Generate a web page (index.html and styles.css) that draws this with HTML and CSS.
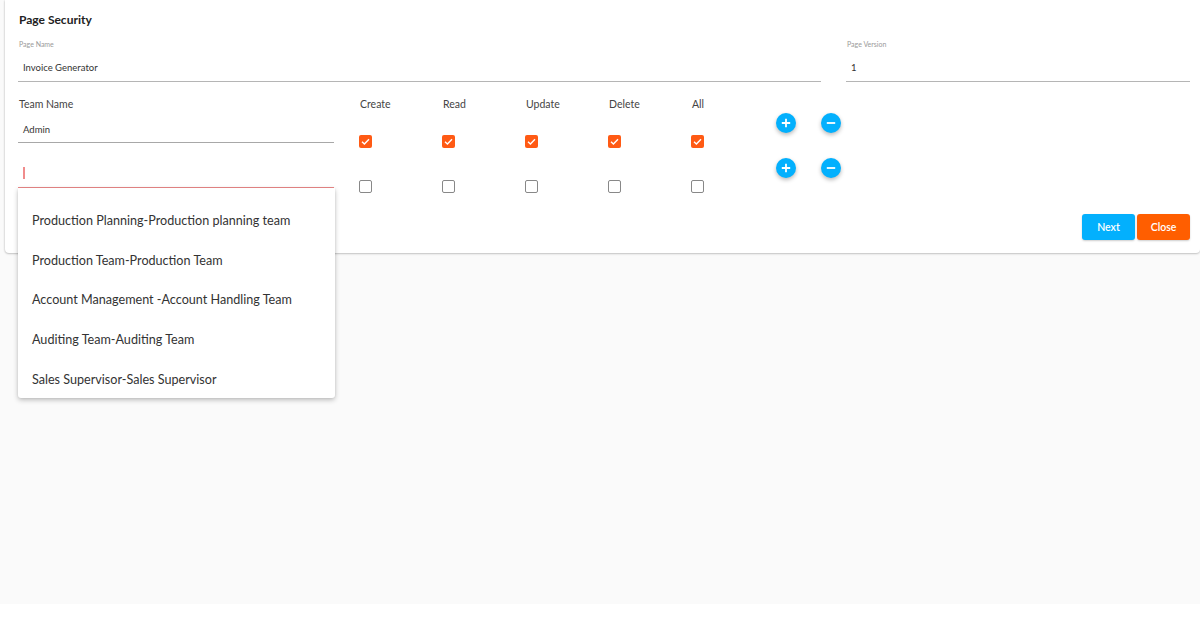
FILE: index.html
```html
<!DOCTYPE html>
<html>
<head>
<meta charset="utf-8">
<link rel="stylesheet" href="styles.css">
</head>
<body>
<div class="page">
  <div class="card">
    <div class="title">Page Security</div>
    <div class="fields">
      <div class="field field-name">
        <div class="label">Page Name</div>
        <div class="input">Invoice Generator</div>
      </div>
      <div class="field field-version">
        <div class="label">Page Version</div>
        <div class="input">1</div>
      </div>
    </div>

    <div class="table">
      <div class="row head">
        <div class="team">Team Name</div>
        <div class="cell">Create</div>
        <div class="cell">Read</div>
        <div class="cell">Update</div>
        <div class="cell">Delete</div>
        <div class="cell">All</div>
      </div>

      <div class="row">
        <div class="team"><div class="team-input">Admin</div></div>
        <div class="cell"><span class="cb on"><svg viewBox="0 0 13 13"><path d="M3 6.8 5.4 9 10 4.2" fill="none" stroke="#fff" stroke-width="1.4"/></svg></span></div>
        <div class="cell"><span class="cb on"><svg viewBox="0 0 13 13"><path d="M3 6.8 5.4 9 10 4.2" fill="none" stroke="#fff" stroke-width="1.4"/></svg></span></div>
        <div class="cell"><span class="cb on"><svg viewBox="0 0 13 13"><path d="M3 6.8 5.4 9 10 4.2" fill="none" stroke="#fff" stroke-width="1.4"/></svg></span></div>
        <div class="cell"><span class="cb on"><svg viewBox="0 0 13 13"><path d="M3 6.8 5.4 9 10 4.2" fill="none" stroke="#fff" stroke-width="1.4"/></svg></span></div>
        <div class="cell"><span class="cb on"><svg viewBox="0 0 13 13"><path d="M3 6.8 5.4 9 10 4.2" fill="none" stroke="#fff" stroke-width="1.4"/></svg></span></div>
        <div class="actions">
          <span class="fab"><svg viewBox="0 0 20 20"><path d="M10 5.8v8.4M5.8 10h8.4" stroke="#fff" stroke-width="1.8"/></svg></span>
          <span class="fab"><svg viewBox="0 0 20 20"><path d="M5.8 10h8.4" stroke="#fff" stroke-width="1.8"/></svg></span>
        </div>
      </div>

      <div class="row">
        <div class="team"><div class="team-input focused"><span class="caret"></span></div></div>
        <div class="cell"><span class="cb"></span></div>
        <div class="cell"><span class="cb"></span></div>
        <div class="cell"><span class="cb"></span></div>
        <div class="cell"><span class="cb"></span></div>
        <div class="cell"><span class="cb"></span></div>
        <div class="actions">
          <span class="fab"><svg viewBox="0 0 20 20"><path d="M10 5.8v8.4M5.8 10h8.4" stroke="#fff" stroke-width="1.8"/></svg></span>
          <span class="fab"><svg viewBox="0 0 20 20"><path d="M5.8 10h8.4" stroke="#fff" stroke-width="1.8"/></svg></span>
        </div>
      </div>
    </div>

    <div class="buttons">
      <button class="btn next">Next</button>
      <button class="btn close">Close</button>
    </div>

    <div class="dropdown">
      <ul class="options">
        <li>Production Planning-Production planning team</li>
        <li>Production Team-Production Team</li>
        <li>Account Management -Account Handling Team</li>
        <li>Auditing Team-Auditing Team</li>
        <li>Sales Supervisor-Sales Supervisor</li>
      </ul>
    </div>
  </div>
</div>
</body>
</html>
```

FILE: styles.css
```css
* { box-sizing: border-box; }
html, body { margin: 0; padding: 0; background: #ffffff; }
body {
  font-family: "Source Sans Pro", Lato, "Liberation Sans", sans-serif;
  color: #333;
  width: 1200px;
  height: 639px;
  overflow: hidden;
}
.page {
  background: #fafafa;
  height: 604px;
  padding-left: 5px;
}
.card {
  position: relative;
  background: #fff;
  height: 253px;
  padding: 12px 10px 0 13px;
  border-radius: 0 0 4px 4px;
  box-shadow: 0 1px 2px rgba(0,0,0,0.22), -1px 0 2px rgba(0,0,0,0.06);
}
.title {
  font-size: 12px;
  line-height: 16px;
  font-weight: 700;
  color: #222;
  padding-left: 1px;
}
.fields {
  display: flex;
  gap: 25px;
  margin-top: 10px;
}
.field-name { width: 803px; }
.field-version { width: 344px; }
.label {
  font-size: 7px;
  line-height: 12px;
  color: #9a9a9a;
  padding-left: 1px;
}
.input {
  font-size: 9.5px;
  line-height: 14px;
  padding: 11px 0 6px 5px;
  border-bottom: 1px solid #b5b5b5;
  color: #333;
}
.table { margin-top: 14px; }
.row {
  display: flex;
  height: 45px;
}
.row.head {
  height: 16px;
  font-size: 10.5px;
  line-height: 16px;
  color: #444;
}
.row.head .team { padding-left: 1px; }
.team { width: 341px; }
.cell { width: 83px; padding-left: 0; }
.row.head .cell { padding-left: 1px; }
.team-input {
  width: 316px;
  height: 31px;
  border-bottom: 1px solid #a8a8a8;
  font-size: 9.5px;
  line-height: 14px;
  padding: 11px 0 0 5px;
  color: #333;
}
.team-input.focused { border-bottom-color: #ee8a8a; padding-top: 10px; }
.caret {
  display: block;
  width: 1.5px;
  height: 12px;
  background: #f08c8c;
}
.row:not(.head) .cell { padding-top: 23px; }
.cb {
  display: block;
  width: 13px;
  height: 13px;
  border: 1.7px solid #888;
  border-radius: 2px;
}
.cb svg { display: block; width: 13px; height: 13px; }
.cb.on {
  border: none;
  background: #ff5a14;
}
.actions {
  display: flex;
  gap: 25px;
  padding-left: 2px;
  padding-top: 1px;
}
.fab {
  display: block;
  width: 20px;
  height: 20px;
  border-radius: 50%;
  background: #03b0fd;
  box-shadow: 0 2px 4px rgba(0,0,0,0.28);
}
.fab svg { display: block; width: 20px; height: 20px; }
.buttons {
  display: flex;
  justify-content: flex-end;
  gap: 2px;
  margin-top: 12px;
}
.btn {
  width: 53px;
  height: 26px;
  border: none;
  border-radius: 3px;
  color: #fff;
  font-family: inherit;
  font-size: 10.5px;
  font-weight: 600;
  padding: 0;
  box-shadow: 0 1px 2px rgba(0,0,0,0.2);
}
.next { background: #03b0fd; }
.close { background: #ff5e00; }
.dropdown {
  position: absolute;
  left: 13px;
  top: 188px;
  width: 317px;
  height: 210px;
  background: #fff;
  overflow: hidden;
  border-radius: 0 0 3px 3px;
  box-shadow: 0 2px 5px rgba(0,0,0,0.25), 0 0 2px rgba(0,0,0,0.08);
}
.options {
  list-style: none;
  margin: 0;
  padding: 13px 0 0 0;
}
.options li {
  height: 39.7px;
  line-height: 40px;
  padding-left: 14px;
  font-size: 12.6px;
  color: #333;
  white-space: nowrap;
}
```
